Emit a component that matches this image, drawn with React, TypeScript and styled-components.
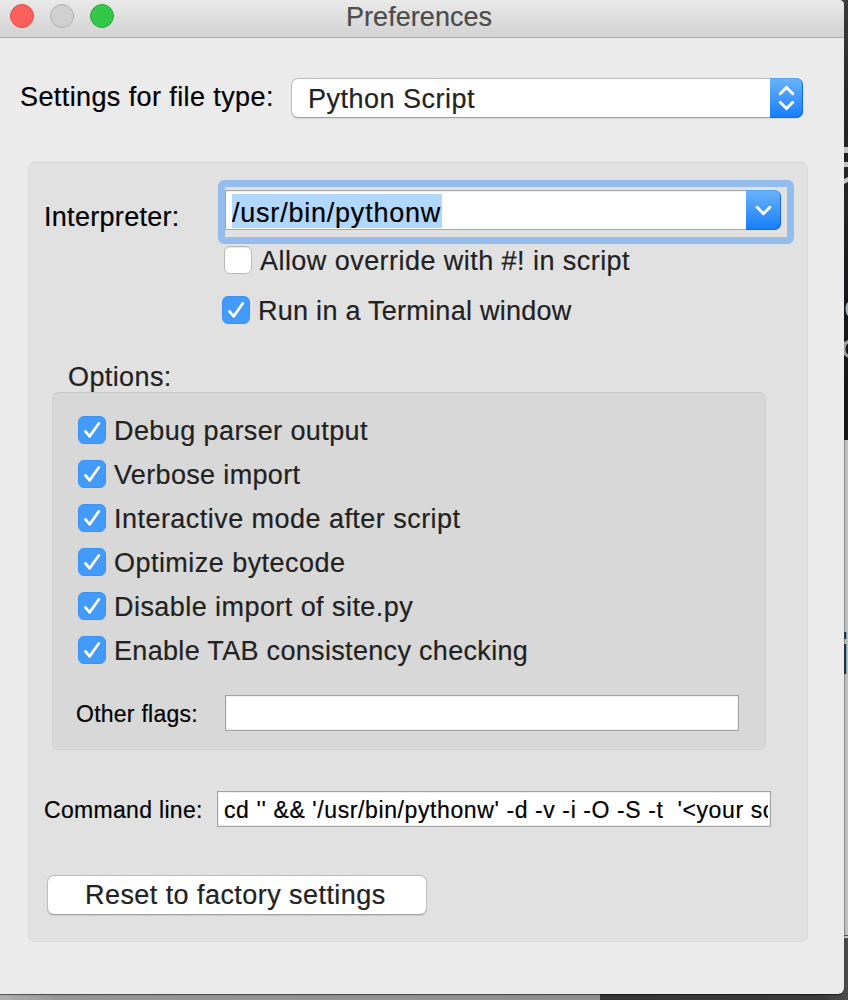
import React from "react";
import styled, { createGlobalStyle } from "styled-components";

const Global = createGlobalStyle`
  *{box-sizing:border-box}
  html,body{margin:0;padding:0}
  body{font-family:"Liberation Sans",Arial,sans-serif;overflow:hidden;background:#474747}
`;

const Desktop = styled.div`
  width: 848px;
  height: 1000px;
  display: flex;
  background: linear-gradient(90deg, #b0b0b0 0, #969696 60px, #8e8e8e 600px, #363636 600px, #3a3a3a 820px, #4b4b4b 848px);
`;
const Window = styled.main`
  width: 844px;
  height: 994px;
  background: #ebebeb;
  border-radius: 0 5px 6px 0;
  overflow: hidden;
  flex: none;
  box-shadow: 0 1px 1px rgba(0, 0, 0, 0.55);
`;
const TitleBar = styled.header`
  height: 38px;
  display: flex;
  align-items: center;
  padding: 0 10px 6px;
  background: linear-gradient(#e9e9e9, #d2d2d2);
  border-bottom: 1px solid #acacac;
`;
const Lights = styled.div`
  display: flex;
  gap: 16px;
`;
const Light = styled.span<{ $fill: string; $edge: string }>`
  width: 24px;
  height: 24px;
  border-radius: 50%;
  background: ${(p) => p.$fill};
  border: 1px solid ${(p) => p.$edge};
`;
const Text = styled.span<{ $ls?: number; $size?: number; $color?: string }>`
  font-size: ${(p) => p.$size ?? 27}px;
  line-height: 30px;
  letter-spacing: ${(p) => p.$ls ?? 0}px;
  color: ${(p) => p.$color ?? "#222"};
  -webkit-text-stroke: 0.2px currentColor;
  white-space: pre;
  flex: none;
`;
const Title = styled.h1`
  margin: 2px 0 0 232px;
  font-weight: 400;
  line-height: 30px;
  display: flex;
`;
const TypeRow = styled.div`
  display: flex;
  height: 40px;
  margin: 40px 0 0 20px;
`;
const TypeLabel = styled.div`
  width: 271px;
  padding-top: 4px;
`;
const Select = styled.div`
  width: 512px;
  height: 40px;
  display: flex;
  justify-content: space-between;
  border-radius: 7px;
  background: #fff;
  border: 1px solid #bcbcbc;
  border-bottom-color: #a2a2a2;
  padding: 5px 0 0 16px;
  box-shadow: 0 1px 1px rgba(0, 0, 0, 0.08);
`;
const BlueButton = styled.span<{ $w: number }>`
  width: ${(p) => p.$w}px;
  height: 40px;
  flex: none;
  display: flex;
  align-items: center;
  justify-content: center;
  border-radius: 0 7px 7px 0;
  background: linear-gradient(#6cb3fa, #157efb);
  box-shadow: inset -1px -1px 0 #1668f0, inset 0 1px 0 #56a2f2;
`;
const SelectButton = styled(BlueButton)`
  margin: -6px -1px 0 0;
`;
const Panel = styled.section`
  width: 780px;
  height: 780px;
  margin: 44px 0 0 28px;
  background: #e1e1e1;
  border: 1px solid #d9d9d9;
  border-top-color: #d0d0d0;
  border-radius: 7px;
  padding-top: 17px;
`;
const InterpreterRow = styled.div`
  display: flex;
  height: 64px;
`;
const InterpreterLabel = styled.div`
  width: 189px;
  padding: 22px 0 0 15px;
`;
const FocusRing = styled.div`
  width: 576px;
  height: 64px;
  border: 7px solid #92bdec;
  border-radius: 6px;
  padding: 3px 0 0;
`;
const Combo = styled.div`
  display: flex;
  justify-content: space-between;
  width: 556px;
  height: 40px;
  background: #fff;
  border: 1px solid #a6a6a6;
  border-radius: 0 7px 7px 0;
  box-shadow: inset 0 1px 0 #eee;
`;
const Selection = styled.span`
  display: flex;
  width: 210px;
  height: 34px;
  margin: 3px 0 0 6px;
  padding-top: 4px;
  background: #b2d7fd;
`;
const ComboButton = styled(BlueButton)`
  margin: -1px -1px 0 0;
`;
const CheckRow = styled.label<{ $x: number; $h?: number }>`
  display: flex;
  align-items: flex-start;
  gap: 8px;
  height: ${(p) => p.$h ?? 44}px;
  margin-left: ${(p) => p.$x}px;
`;
const Box = styled.span<{ $on?: boolean }>`
  width: 28px;
  height: 28px;
  flex: none;
  border-radius: 6px;
  background: ${(p) => (p.$on ? "#429bfb" : "#fff")};
  border: 1px solid ${(p) => (p.$on ? "#3b94f4" : "#b9b9b9")};
  box-shadow: ${(p) => (p.$on ? "none" : "inset 0 1px 1px #e8e8e8")};
  svg {
    display: block;
  }
`;
const OverrideRow = styled(CheckRow)`
  padding-top: 2px;
`;
const OptionsTitle = styled.div`
  padding: 17px 0 0 39px;
  height: 47px;
`;
const OptionsBox = styled.div`
  width: 714px;
  height: 358px;
  margin-left: 23px;
  padding-top: 23px;
  background: #d8d8d8;
  border: 1px solid #d1d1d1;
  border-top-color: #c6c6c6;
  border-radius: 7px;
`;
const FieldRow = styled.div<{ $x: number; $y: number }>`
  display: flex;
  margin: ${(p) => p.$y}px 0 0 ${(p) => p.$x}px;
  height: 36px;
`;
const FieldLabel = styled.div<{ $w: number }>`
  width: ${(p) => p.$w}px;
  padding-top: 4px;
  flex: none;
`;
const Field = styled.div<{ $w: number }>`
  width: ${(p) => p.$w}px;
  height: 36px;
  background: #fff;
  border: 1px solid #a3a3a3;
  box-shadow: inset 0 0 0 1px #f0f0f0;
  padding: 3px 2px 0 6px;
`;
const Clip = styled.div`
  overflow: hidden;
  display: flex;
`;
const Reset = styled.button`
  display: flex;
  width: 380px;
  height: 40px;
  margin: 48px 0 0 18px;
  padding: 4px 0 0 37px;
  background: #fff;
  border: 1px solid #bdbdbd;
  border-bottom-color: #a2a2a2;
  border-radius: 7px;
  box-shadow: 0 1px 1px rgba(0, 0, 0, 0.1);
  font-family: inherit;
  text-align: left;
`;
const Behind = styled.aside`
  width: 4px;
  height: 1000px;
  display: flex;
  flex-direction: column;
`;
const Dark = styled.div`
  height: 440px;
  background: linear-gradient(#3a3a3a, #202224 130px, #222426 200px, #15171a 300px, #151515);
`;
const Pale = styled.div`
  height: 498px;
  background: linear-gradient(90deg, #8a8a8a 1px, #b9b9b9 1px, #c4c4c4);
  border-bottom: 1px solid #d8d8d8;
`;
const PaleEdge = styled.div`
  height: 1px;
  margin-top: -3px;
  background: #555;
`;

const Check = () => (
  <svg width="26" height="26" viewBox="0 0 26 26" fill="none">
    <path d="M6.5 15.4 10.6 20.4 19.8 7.2" stroke="#2b7fdc" strokeOpacity=".5" strokeWidth="2.8" strokeLinecap="round" strokeLinejoin="round" />
    <path d="M6.5 14.5 10.6 19.4 19.8 6.5" stroke="#fff" strokeWidth="2.8" strokeLinecap="round" strokeLinejoin="round" />
  </svg>
);

const options: [string, number][] = [
  ["Debug parser output", 0.41],
  ["Verbose import", 0.34],
  ["Interactive mode after script", 0.46],
  ["Optimize bytecode", 0.46],
  ["Disable import of site.py", 0.44],
  ["Enable TAB consistency checking", 0.32],
];

export default function App() {
  return (
    <>
      <Global />
      <Desktop>
        <Window>
          <TitleBar>
            <Lights>
              <Light $fill="#fc605b" $edge="#e34a48" />
              <Light $fill="#d0d0d0" $edge="#b0b0b0" />
              <Light $fill="#34c84a" $edge="#28a93a" />
            </Lights>
            <Title>
              <Text $ls={0.05} $color="#4c4c4c">Preferences</Text>
            </Title>
          </TitleBar>
          <TypeRow>
            <TypeLabel>
              <Text $ls={0.4} $color="#000">Settings for file type:</Text>
            </TypeLabel>
            <Select>
              <Text $ls={0.5}>Python Script</Text>
              <SelectButton $w={33}>
                <svg width="17" height="26" viewBox="0 0 17 26" fill="none" stroke="#fff" strokeWidth="2.9" strokeLinecap="round" strokeLinejoin="round">
                  <path d="M2.2 8.8 8.5 2.4 14.8 8.8M2.2 17.2 8.5 23.6 14.8 17.2" />
                </svg>
              </SelectButton>
            </Select>
          </TypeRow>
          <Panel>
            <InterpreterRow>
              <InterpreterLabel>
                <Text $ls={0.3} $color="#000">Interpreter:</Text>
              </InterpreterLabel>
              <FocusRing>
                <Combo>
                  <Selection>
                    <Text $ls={0.78} $color="#000">/usr/bin/pythonw</Text>
                  </Selection>
                  <ComboButton $w={35}>
                    <svg width="17" height="11" viewBox="0 0 17 11" fill="none" stroke="#fff" strokeWidth="2.9" strokeLinecap="round" strokeLinejoin="round">
                      <path d="M2.2 2.3 8.5 8.7 14.8 2.3" />
                    </svg>
                  </ComboButton>
                </Combo>
              </FocusRing>
            </InterpreterRow>
            <OverrideRow $x={195} $h={52}>
              <Box />
              <Text $ls={0.45}>Allow override with #! in script</Text>
            </OverrideRow>
            <CheckRow $x={193} $h={49}>
              <Box $on><Check /></Box>
              <Text $ls={0.27}>Run in a Terminal window</Text>
            </CheckRow>
            <OptionsTitle>
              <Text $ls={0.4}>Options:</Text>
            </OptionsTitle>
            <OptionsBox>
              {options.map(([label, ls]) => (
                <CheckRow key={label} $x={25}>
                  <Box $on><Check /></Box>
                  <Text $ls={ls}>{label}</Text>
                </CheckRow>
              ))}
              <FieldRow $x={23} $y={15}>
                <FieldLabel $w={149}>
                  <Text $size={23} $ls={0.25} $color="#000">Other flags:</Text>
                </FieldLabel>
                <Field $w={514} />
              </FieldRow>
            </OptionsBox>
            <FieldRow $x={15} $y={41}>
              <FieldLabel $w={173}>
                <Text $size={23} $ls={0.31} $color="#000">Command line:</Text>
              </FieldLabel>
              <Field $w={554}>
                <Clip>
                  <Text $size={23} $ls={0.6} $color="#000">{"cd '' && '/usr/bin/pythonw' -d -v -i -O -S -t  '<your script>'"}</Text>
                </Clip>
              </Field>
            </FieldRow>
            <Reset>
              <Text $ls={0.44}>Reset to factory settings</Text>
            </Reset>
          </Panel>
        </Window>
        <Behind>
          <Dark>
            <svg width="4" height="440" viewBox="0 0 4 440">
              <path d="M0 147h4v6H0zM0 162h4v5H0zM0 179 4 177v5L0 184z" fill="#c4c4c4" />
              <path d="M1.5 309Q1.5 304 4 302V316Q1.5 314 1.5 309z" fill="#9fb0ba" />
              <path d="M0 342 4 340V344Q2 344 1.5 349Q2 354 4 354V358L0 355z" fill="#a19c96" />
            </svg>
          </Dark>
          <Pale>
            <svg width="4" height="240" viewBox="0 0 4 240">
              <path d="M0 192h2v7H0zM0 204h2v30H0z" fill="#28303c" />
              <path d="M2 192h1v7H2zM2 204h1v30H2z" fill="#83a2b2" />
            </svg>
          </Pale>
          <PaleEdge />
        </Behind>
      </Desktop>
    </>
  );
}
